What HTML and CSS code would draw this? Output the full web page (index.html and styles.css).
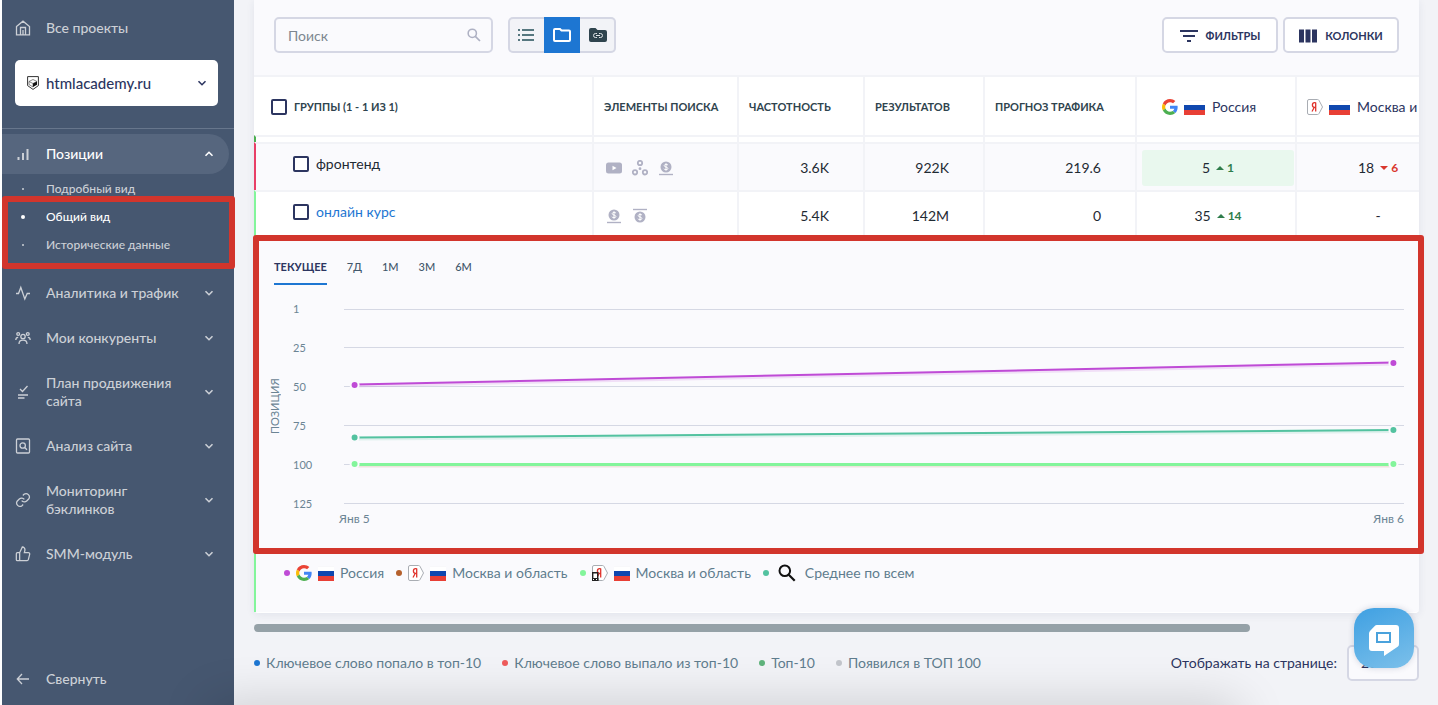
FILE: index.html
```html
<!DOCTYPE html>
<html lang="ru">
<head>
    <meta charset="UTF-8">
    <meta name="viewport" content="width=device-width, initial-scale=1.0">
    <title>Позиции - Общий вид</title>
    <link rel="stylesheet" href="styles.css">
</head>
<body>

    <!-- shared icons -->
    <svg class="sprite" aria-hidden="true">
        <symbol id="chevron" viewBox="0 0 10 10"><path d="M1.5 3.2 5 6.7 8.5 3.2" fill="none" stroke="currentColor" stroke-width="1.6"/></symbol>
        <symbol id="google" viewBox="0 0 48 48">
            <path fill="#EA4335" d="M24 9.5c3.54 0 6.71 1.22 9.21 3.6l6.85-6.85C35.9 2.38 30.47 0 24 0 14.62 0 6.51 5.38 2.56 13.22l7.98 6.19C12.43 13.72 17.74 9.5 24 9.5z"/>
            <path fill="#4285F4" d="M46.98 24.55c0-1.57-.15-3.09-.38-4.55H24v9.02h12.94c-.58 2.96-2.26 5.48-4.78 7.18l7.73 6c4.51-4.18 7.09-10.36 7.09-17.65z"/>
            <path fill="#FBBC05" d="M10.53 28.59c-.48-1.45-.76-2.99-.76-4.59s.27-3.14.76-4.59l-7.98-6.19C.92 16.46 0 20.12 0 24c0 3.88.92 7.54 2.56 10.78l7.97-6.19z"/>
            <path fill="#4CAF50" d="M24 48c6.48 0 11.93-2.13 15.89-5.81l-7.73-6c-2.15 1.45-4.92 2.3-8.16 2.3-6.26 0-11.57-4.22-13.47-9.91l-7.98 6.19C6.51 42.62 14.62 48 24 48z"/>
        </symbol>
        <symbol id="yandex" viewBox="0 0 16 16">
            <path d="M2 .5h8.500q1 0 1.500.9L15.500 8 12 14.600q-.5.9-1.500.9H2Q.5 15.500.5 14V2Q.5.5 2 .5z" fill="#fff" stroke="#a9adb3"/>
            <path d="M8.700 3.500v9M8.700 3.700H7.600Q5.400 3.700 5.400 6T7.600 8.300h1.100M7.300 8.300 5 12.500" fill="none" stroke="#e0332c" stroke-width="1.300"/>
        </symbol>
        <symbol id="flag" viewBox="0 0 21 15" preserveAspectRatio="none">
            <path fill="#fff" d="M0 0h21v5H0z"/><path fill="#0f47af" d="M0 5h21v5H0z"/><path fill="#e83f35" d="M0 10h21v5H0z"/><path stroke="#eeeef3" stroke-width=".6" d="M0 .300h21"/>
        </symbol>
        <symbol id="ad-bottom" viewBox="0 0 16 16">
            <circle cx="8" cy="7" r="5.500" fill="currentColor"/>
            <path d="M10 5.200Q9.400 4.300 8 4.300T6.200 5.600Q6.200 6.600 8 7t1.900 1.400Q9.900 9.700 8 9.700T6 8.700M8 3.300v7.400" fill="none" stroke="#fff"/>
            <path d="M1 14.500h14" stroke="currentColor" stroke-width="1.400"/>
        </symbol>
        <symbol id="search" viewBox="0 0 18 18"><circle cx="6.800" cy="6.800" r="5.300" fill="none" stroke="currentColor" stroke-width="2"/><path d="m10.700 10.700 6 6" stroke="currentColor" stroke-width="2.200"/></symbol>
    </svg>

    <div class="page">
        <aside class="sidebar">
            <a class="nav-item all-projects" href="#">
                <svg class="nav-icon" viewBox="0 0 16 16"><path d="M1.500 6.500 8 1.200l6.500 5.300v8.300h-13zM5.500 14.800V7.500h5v7.300M8 10v4.800"/></svg>
                <span>Все проекты</span>
            </a>
            <button class="project">
                <svg class="project-logo" viewBox="0 0 12 14"><path d="M.6.600h10.800v9L6 13.400.600 9.600z" fill="#fff" stroke="#333" /><path d="m2 5.500 4-2 4 2-4 2zM2 5.500v3l4 2.500V7.500" fill="none" stroke="#555" stroke-width=".7"/><path d="m6 7.500 4-2v3.300L6 11z" fill="#111"/></svg>
                <span>htmlacademy.ru</span>
                <svg class="chevron"><use href="#chevron"/></svg>
            </button>
            <nav class="menu">
                <a class="nav-item active" href="#">
                    <svg class="nav-icon bars" viewBox="0 0 16 16"><path d="M3.500 14v-3M8 14V7M12.500 14V3" stroke-width="2"/></svg>
                    <span>Позиции</span>
                    <svg class="chevron expanded"><use href="#chevron"/></svg>
                </a>
                <ul class="submenu">
                    <li><a href="#">Подробный вид</a></li>
                    <li class="current"><a href="#">Общий вид</a></li>
                    <li><a href="#">Исторические данные</a></li>
                </ul>
                <a class="nav-item" href="#">
                    <svg class="nav-icon" viewBox="0 0 16 16"><path d="M1 8.500h2.500L5.800 2.500 9.800 14l2.400-5.500H15"/></svg>
                    <span>Аналитика и трафик</span>
                    <svg class="chevron"><use href="#chevron"/></svg>
                </a>
                <a class="nav-item" href="#">
                    <svg class="nav-icon" viewBox="0 0 16 16"><circle cx="8" cy="6.500" r="2.200"/><circle cx="3.200" cy="4" r="1.400"/><circle cx="12.800" cy="4" r="1.400"/><path d="M4 14q0-3.800 4-3.800t4 3.800M.8 10q0-2.700 2.400-2.700M15.200 10q0-2.700-2.400-2.700"/></svg>
                    <span>Мои конкуренты</span>
                    <svg class="chevron"><use href="#chevron"/></svg>
                </a>
                <a class="nav-item" href="#">
                    <svg class="nav-icon" viewBox="0 0 16 16"><path d="m5 5 2.500 2.500L12.500 2M3 11h10M3 14h6.500"/></svg>
                    <span>План продвижения сайта</span>
                    <svg class="chevron"><use href="#chevron"/></svg>
                </a>
                <a class="nav-item" href="#">
                    <svg class="nav-icon" viewBox="0 0 16 16"><rect x="1.500" y="1" width="13" height="14" rx="1"/><circle cx="7.700" cy="7.500" r="2.700"/><path d="m9.700 9.500 2.300 2.300"/></svg>
                    <span>Анализ сайта</span>
                    <svg class="chevron"><use href="#chevron"/></svg>
                </a>
                <a class="nav-item" href="#">
                    <svg class="nav-icon" viewBox="0 0 24 24"><path stroke-width="1.900" d="M10 13a5 5 0 0 0 7.500.5l3-3a5 5 0 0 0-7-7l-1.700 1.700M14 11a5 5 0 0 0-7.500-.5l-3 3a5 5 0 0 0 7 7l1.700-1.700"/></svg>
                    <span>Мониторинг бэклинков</span>
                    <svg class="chevron"><use href="#chevron"/></svg>
                </a>
                <a class="nav-item" href="#">
                    <svg class="nav-icon" viewBox="0 0 24 24"><path stroke-width="1.900" d="M7 10v12M15 5.900 14 10h6a2 2 0 0 1 2 2.500l-2 8a2 2 0 0 1-2 1.500H3.500A1.500 1.500 0 0 1 2 20.500v-9A1.500 1.500 0 0 1 3.500 10H7l4-8.500c2.500 0 4 2 4 4.400z"/></svg>
                    <span>SMM-модуль</span>
                    <svg class="chevron"><use href="#chevron"/></svg>
                </a>
            </nav>
            <a class="nav-item collapse" href="#">
                <svg class="nav-icon" viewBox="0 0 16 16"><path d="M14 8H2.500M7 3 2.300 8 7 13"/></svg>
                <span>Свернуть</span>
            </a>
            <div class="marker marker-menu"></div>
        </aside>

        <main class="content">
            <section class="card">
                <div class="toolbar">
                    <div class="search">
                        <input type="text" placeholder="Поиск" aria-label="Поиск">
                        <svg><use href="#search"/></svg>
                    </div>
                    <div class="views">
                        <button aria-label="Список"><svg viewBox="0 0 18 14"><path d="M5 2h12M5 7h12M5 12h12M1 2h2M1 7h2M1 12h2" stroke="#56777f" stroke-width="2"/></svg></button>
                        <button class="selected" aria-label="Группы"><svg viewBox="0 0 18 14"><path d="M1 2.500V12q0 1 1 1h14q1 0 1-1V3.500q0-1-1-1H8.500L7 1H2Q1 1 1 2z" fill="none" stroke="#fff" stroke-width="2"/></svg></button>
                        <button aria-label="Страницы"><svg viewBox="0 0 18 14"><path d="M0 2Q0 0 2 0h4.500l2 2H16q2 0 2 2v8q0 2-2 2H2q-2 0-2-2z" fill="#2f444e"/><path d="M8 5.500H6.500a2 2 0 0 0 0 4H8M10 5.500h1.500a2 2 0 0 1 0 4H10M7 7.500h4" fill="none" stroke="#dfe3e6"/></svg></button>
                    </div>
                    <div class="actions">
                        <button><svg viewBox="0 0 18 14"><path d="M0 2h18M3 7h12M7 12h4" stroke="#2c3560" stroke-width="2"/></svg>ФИЛЬТРЫ</button>
                        <button><svg viewBox="0 0 18 14"><path d="M0 .500h5v13H0zM6.500.500h5v13h-5zM13 .500h5v13h-5z" fill="#2c3560"/></svg>КОЛОНКИ</button>
                    </div>
                </div>

                <div class="table-view">
                    <table class="keywords">
                        <colgroup>
                            <col><col class="col-serp"><col class="col-volume"><col class="col-results"><col class="col-traffic"><col class="col-google"><col class="col-yandex">
                        </colgroup>
                        <thead>
                            <tr>
                                <th><label class="check"><input type="checkbox">ГРУППЫ (1 - 1 ИЗ 1)</label></th>
                                <th>ЭЛЕМЕНТЫ ПОИСКА</th>
                                <th>ЧАСТОТНОСТЬ</th>
                                <th>РЕЗУЛЬТАТОВ</th>
                                <th>ПРОГНОЗ ТРАФИКА</th>
                                <th class="engine"><div><svg class="logo"><use href="#google"/></svg><svg class="flag"><use href="#flag"/></svg>Россия</div></th>
                                <th class="engine last"><div><svg class="logo"><use href="#yandex"/></svg><svg class="flag"><use href="#flag"/></svg>Москва и область</div></th>
                            </tr>
                        </thead>
                        <tbody>
                            <tr class="strip"><td></td><td></td><td></td><td></td><td></td><td></td><td></td></tr>
                            <tr class="keyword lost">
                                <td><label class="check"><input type="checkbox">фронтенд</label></td>
                                <td>
                                    <div class="features">
                                        <svg viewBox="0 0 16 16"><rect y="2.500" width="16" height="11" rx="2.500" fill="currentColor"/><path d="m6.500 5.700 4 2.300-4 2.300z" fill="#fff"/></svg>
                                        <svg viewBox="0 0 16 16"><g fill="none" stroke="currentColor" stroke-width="1.800"><circle cx="8" cy="3" r="2.200"/><circle cx="3" cy="12.300" r="2.200"/><circle cx="13" cy="12.300" r="2.200"/></g><circle cx="8" cy="8.700" r="1.400" fill="currentColor"/></svg>
                                        <svg><use href="#ad-bottom"/></svg>
                                    </div>
                                </td>
                                <td class="num">3.6K</td>
                                <td class="num">922K</td>
                                <td class="num">219.6</td>
                                <td class="place"><div class="top"><span>5</span><i class="rise"></i><b class="up">1</b></div></td>
                                <td class="place"><div><span>18</span><i class="fall"></i><b class="down">6</b></div></td>
                            </tr>
                            <tr class="keyword open">
                                <td><label class="check"><input type="checkbox">онлайн курс</label></td>
                                <td>
                                    <div class="features">
                                        <svg><use href="#ad-bottom"/></svg>
                                        <svg viewBox="0 0 16 16"><circle cx="8" cy="9" r="5.500" fill="currentColor"/><path d="M10 7.200Q9.400 6.300 8 6.300T6.200 7.600Q6.200 8.600 8 9t1.900 1.400Q9.900 11.700 8 11.700T6 10.700M8 5.300v7.400" fill="none" stroke="#fff"/><path d="M1 1.500h14" stroke="currentColor" stroke-width="1.400"/></svg>
                                    </div>
                                </td>
                                <td class="num">5.4K</td>
                                <td class="num">142M</td>
                                <td class="num">0</td>
                                <td class="place"><div><span>35</span><i class="rise"></i><b class="up">14</b></div></td>
                                <td class="place"><div>-</div></td>
                            </tr>
                        </tbody>
                    </table>
                </div>

                <div class="details">
                    <div class="tabs">
                        <button class="selected">ТЕКУЩЕЕ</button>
                        <button>7Д</button>
                        <button>1М</button>
                        <button>3М</button>
                        <button>6М</button>
                    </div>
                    <div class="chart">
                        <div class="axis-title">ПОЗИЦИЯ</div>
                        <div class="axis-y"><span>1</span><span>25</span><span>50</span><span>75</span><span>100</span><span>125</span></div>
                        <div class="plot">
                            <svg class="lines">
                                <g stroke="#d5d8e4">
                                    <line x1="0" x2="100%" y1="9.500" y2="9.500"/>
                                    <line x1="0" x2="100%" y1="47.500" y2="47.500"/>
                                    <line x1="0" x2="100%" y1="86.500" y2="86.500"/>
                                    <line x1="0" x2="100%" y1="125.500" y2="125.500"/>
                                    <line x1="0" x2="100%" y1="164.500" y2="164.500"/>
                                    <line x1="0" x2="100%" y1="203.500" y2="203.500"/>
                                </g>
                                <g stroke-width="3" opacity=".15">
                                    <line x1="1%" x2="99%" y1="86" y2="64" stroke="#bf4bd6"/>
                                    <line x1="1%" x2="99%" y1="139" y2="131.500" stroke="#53c2a0"/>
                                    <line x1="1%" x2="99%" y1="166" y2="166" stroke="#b5602c"/>
                                </g>
                                <g stroke-width="2">
                                    <line x1="1%" x2="99%" y1="84.500" y2="62.500" stroke="#bf4bd6"/>
                                    <line x1="1%" x2="99%" y1="137.500" y2="130" stroke="#53c2a0"/>
                                    <line x1="1%" x2="99%" y1="164.500" y2="164.500" stroke="#83f59b" stroke-width="3"/>
                                </g>
                                <g stroke="#fafafd" stroke-width="2">
                                    <circle cx="1%" cy="85" r="4" fill="#bf4bd6"/><circle cx="99%" cy="63" r="4" fill="#bf4bd6"/>
                                    <circle cx="1%" cy="137.500" r="4" fill="#53c2a0"/><circle cx="99%" cy="130" r="4" fill="#53c2a0"/>
                                    <circle cx="1%" cy="164" r="4" fill="#83f59b"/><circle cx="99%" cy="164" r="4" fill="#83f59b"/>
                                </g>
                            </svg>
                            <div class="axis-x"><span>Янв 5</span><span>Янв 6</span></div>
                        </div>
                    </div>
                    <ul class="series">
                        <li><i class="dot purple"></i><svg class="logo"><use href="#google"/></svg><svg class="flag small"><use href="#flag"/></svg>Россия</li>
                        <li><i class="dot brown"></i><svg class="logo"><use href="#yandex"/></svg><svg class="flag small"><use href="#flag"/></svg>Москва и область</li>
                        <li><i class="dot lime"></i><svg class="logo" viewBox="0 0 16 16"><use href="#yandex"/><path d="M.7 7.700h5v7.600h-5z" fill="#fff" stroke="#222" stroke-width="1.400"/><path d="M0 13h6.400v3H0z" fill="#222"/><path d="M1 14.500h1M4 14.500h1" stroke="#fff"/></svg><svg class="flag small"><use href="#flag"/></svg>Москва и область</li>
                        <li><i class="dot teal"></i><svg class="average"><use href="#search"/></svg>Среднее по всем</li>
                    </ul>
                </div>
                <div class="marker marker-chart"></div>
            </section>

            <div class="scrollbar"><div class="thumb"></div></div>

            <footer class="footer">
                <ul class="legend">
                    <li><i class="dot blue"></i>Ключевое слово попало в топ-10</li>
                    <li><i class="dot red"></i>Ключевое слово выпало из топ-10</li>
                    <li><i class="dot green"></i>Топ-10</li>
                    <li><i class="dot gray"></i>Появился в ТОП 100</li>
                </ul>
                <label for="per-page">Отображать на странице:</label>
                <select id="per-page"><option>20</option><option>50</option><option>100</option></select>
            </footer>
        </main>
    </div>

    <button class="chat" aria-label="Чат">
        <svg viewBox="0 0 30 31"><path d="M8 0h19q3 0 3 3v16q0 1.500-1 2.500L15 31v-5H3q-3 0-3-3V8.500q0-1.500 1-2.500l4.500-4.700Q6.500 0 8 0z" fill="#fff"/><rect x="8" y="8" width="13" height="9" fill="none" stroke="#4aa2dc" stroke-width="2"/></svg>
    </button>
    <div class="bottom-shade"></div>

</body>
</html>
```
FILE: styles.css
```css
* {
    box-sizing: border-box;
}

body {
    margin: 0;
    background: #f2f3f7;
    font-family: Lato, 'Open Sans', sans-serif;
    font-size: 14px;
    line-height: 18px;
    color: #2c3560;
}

button, input, select {
    font: inherit;
    color: inherit;
}

a {
    color: inherit;
    text-decoration: none;
}

ul {
    list-style: none;
    margin: 0;
    padding: 0;
}

.sprite {
    display: none;
}

.page {
    display: flex;
    min-height: 100vh;
    border-left: 2px solid #fff;
}

/* sidebar */
.sidebar {
    position: relative;
    display: flex;
    flex-direction: column;
    width: 232px;
    flex-shrink: 0;
    background: #465770;
    color: #ccd0d6;
    font-weight: 500;
}

.nav-item {
    display: flex;
    align-items: center;
    min-height: 45px;
    padding: 13px 20px 14px 13px;
}

.nav-item span {
    width: 150px;
    margin-left: 15px;
}

.nav-icon {
    width: 16px;
    height: 16px;
    flex-shrink: 0;
    fill: none;
    stroke: currentColor;
    stroke-width: 1.3;
}

.bars {
    color: #ccd0d6;
}

.chevron {
    width: 10px;
    height: 10px;
    flex-shrink: 0;
    margin-left: auto;
}

.chevron.expanded {
    transform: rotate(180deg);
}

.all-projects {
    margin-top: 6px;
}

.project {
    display: flex;
    align-items: center;
    height: 46px;
    margin: 9px 16px 22px 13px;
    padding: 0 11px 0 12px;
    border: none;
    border-radius: 5px;
    background: #fff;
    color: #2c3560;
    font-size: 15px;
    cursor: pointer;
}

.project-logo {
    width: 12px;
    height: 14px;
    margin-right: 7px;
}

.menu {
    padding-top: 5px;
    border-top: 1px solid #67768c;
}

.nav-item.active {
    min-height: 40px;
    margin-right: 5px;
    padding: 11px 15px 11px 13px;
    border-radius: 0 20px 20px 0;
    background: #56667e;
    color: #fff;
}

.submenu {
    padding: 1px 0 12px;
    font-size: 12px;
}

.submenu li {
    display: flex;
    align-items: center;
    height: 28px;
}

.submenu li::before {
    content: "";
    width: 2px;
    height: 2px;
    margin: 0 22px 0 20px;
    border-radius: 50%;
    background: currentColor;
}

.submenu .current {
    color: #fff;
}

.submenu .current::before {
    width: 4px;
    height: 4px;
    margin: 0 21px 0 19px;
}

.collapse {
    margin-top: auto;
    margin-bottom: 3px;
}

/* red frames over the interface */
.marker {
    position: absolute;
    z-index: 2;
    border: 6px solid #d2352c;
    border-radius: 3px;
    pointer-events: none;
}

.marker-menu {
    top: 196px;
    left: 0;
    right: -1px;
    height: 73px;
}

.marker-chart {
    top: 235px;
    left: -1px;
    right: -5px;
    height: 319px;
}

/* main area */
.content {
    flex: 1;
    min-width: 0;
    padding: 0 19px 0 20px;
}

.card {
    position: relative;
    background: #fafafd;
    border-bottom: 1px solid #fff;
    border-radius: 0 0 4px 4px;
    box-shadow: 0 2px 8px rgba(44, 53, 96, 0.08);
}

.toolbar {
    display: flex;
    gap: 15px;
    padding: 17px 20px 22px;
}

.search {
    display: flex;
    align-items: center;
    width: 219px;
    height: 36px;
    padding: 0 10px 0 12px;
    border: 2px solid #d5d7e4;
    border-radius: 5px;
}

.search input {
    flex: 1;
    min-width: 0;
    padding: 2px 0 0;
    border: none;
    outline: none;
    background: none;
}

.search input::placeholder {
    color: #7d8790;
}

.search svg {
    width: 14px;
    height: 14px;
    color: #aeb1c3;
}

.views {
    display: flex;
    border-radius: 5px;
    background: #f2f3f7;
    box-shadow: inset 0 0 0 2px #d5d7e4;
}

.views button {
    width: 36px;
    height: 36px;
    padding: 3px 0 0;
    border: none;
    background: none;
}

.views svg {
    width: 18px;
    height: 14px;
}

.views .selected {
    background: #1d76d2;
}

.actions {
    display: flex;
    gap: 5px;
    margin-left: auto;
}

.actions button {
    display: flex;
    align-items: center;
    justify-content: center;
    gap: 8px;
    width: 116px;
    padding: 2px 0 0;
    border: 2px solid #d5d7e4;
    border-radius: 5px;
    background: #fff;
    font-size: 11px;
    font-weight: 700;
}

.actions svg {
    width: 18px;
    height: 14px;
}

/* keywords table */
.table-view {
    overflow: hidden;
}

.keywords {
    width: calc(100% + 38px);
    table-layout: fixed;
    border-collapse: separate;
    border-spacing: 0;
    background: #fff;
    color: #1f2a33;
}

.col-serp { width: 145px; }
.col-volume { width: 126px; }
.col-results { width: 120px; }
.col-traffic { width: 152px; }
.col-google { width: 160px; }
.col-yandex { width: 160px; }

.keywords th,
.keywords td {
    padding: 0 10px;
    border-top: 2px solid #f2f3f7;
    border-right: 2px solid #f2f3f7;
    text-align: left;
    white-space: nowrap;
}

.keywords th {
    height: 60px;
    padding-top: 2px;
    color: #2f444e;
    font-size: 11px;
    font-weight: 700;
}

.keywords th:first-child {
    padding-left: 17px;
}

.check {
    display: flex;
    align-items: center;
    gap: 7px;
}

.check input {
    appearance: none;
    width: 16px;
    height: 16px;
    margin: 0;
    border: 2px solid #2c3560;
    border-radius: 2px;
    background: #fff;
}

.keywords .engine {
    color: #2c3560;
    font-size: 14px;
    font-weight: 400;
}

.engine div {
    display: flex;
    align-items: center;
    padding-left: 15px;
}

.engine.last div {
    padding-left: 0;
}

.logo {
    width: 16px;
    height: 16px;
    flex-shrink: 0;
}

.flag {
    width: 21px;
    height: 15px;
    flex-shrink: 0;
    margin: 0 7px 0 6px;
}

.flag.small {
    width: 16px;
    margin: 0 6px;
}

.keywords .strip td {
    height: 7px;
}

.keywords .strip td:first-child {
    border-left: 2px solid #4caf50;
}

.keywords .keyword td {
    height: 48px;
    padding-top: 2px;
}

.keywords .keyword td:first-child {
    padding: 0 10px 7px 37px;
    border-left: 2px solid #83f59b;
}

.keywords .lost {
    background: #fafafd;
}

.keywords .lost td:first-child {
    border-left-color: #e83e66;
}

.open label {
    color: #1d76d2;
}

.features {
    display: flex;
    gap: 10px;
    padding-left: 2px;
    color: #b0b1c4;
}

.features svg {
    width: 16px;
    height: 16px;
}

.keywords .num {
    padding-right: 34px;
    text-align: right;
}

.keywords .place {
    padding: 0 1px 0 5px;
}

.place div {
    display: flex;
    align-items: center;
    justify-content: center;
    gap: 6px;
    height: 36px;
    border-radius: 3px;
}

.place .top {
    background: #e9f8ee;
}

.place b {
    margin-left: -3px;
    font-size: 12px;
    font-weight: 700;
}

.place i {
    border: 4px solid transparent;
    border-top-width: 0;
    border-bottom: 4px solid #2f7d4b;
}

.place .fall {
    border-top: 4px solid #d9372e;
    border-bottom-width: 0;
}

.place .up {
    color: #2f7d4b;
}

.place .down {
    color: #d9372e;
}

/* expanded row with chart */
.details {
    border-left: 2px solid #83f59b;
    border-top: 2px solid #f2f3f7;
    padding: 14px 15px 30px 18px;
}

.tabs {
    display: flex;
    gap: 20px;
}

.tabs button {
    height: 31px;
    padding: 0 0 4px;
    border: none;
    border-bottom: 2px solid transparent;
    background: none;
    color: #42576b;
    font-size: 11px;
    font-weight: 500;
}

.tabs .selected {
    border-bottom-color: #1d76d2;
    color: #2c3560;
    font-weight: 700;
}

.chart {
    display: flex;
    height: 279px;
    padding-top: 15px;
    color: #6b8494;
    font-size: 11px;
}

.axis-title {
    width: 19px;
    height: 212px;
    margin: 0 8px 0 -8px;
    line-height: 18px;
    text-align: center;
    writing-mode: vertical-rl;
    transform: rotate(180deg);
}

.axis-y {
    display: flex;
    flex-direction: column;
    justify-content: space-between;
    width: 51px;
    height: 213px;
}

.plot {
    flex: 1;
}

.lines {
    display: block;
    width: 100%;
    height: 210px;
}

.axis-x {
    display: flex;
    justify-content: space-between;
    margin-left: -5px;
    font-size: 12px;
}

.series,
.legend {
    display: flex;
    color: #5f7d8e;
}

.series {
    gap: 12px;
    padding-left: 10px;
}

.series li,
.legend li {
    display: flex;
    align-items: center;
}

.dot {
    width: 6px;
    height: 6px;
    flex-shrink: 0;
    margin-right: 6px;
    border-radius: 50%;
}

.purple { background: #bf4bd6; }
.brown { background: #b5602c; }
.lime { background: #83f59b; }
.teal { background: #53c2a0; }
.blue { background: #1d76d2; }
.red { background: #ee5b5b; }
.green { background: #5fb37c; }
.gray { background: #c2c5cb; }

.average {
    width: 18px;
    height: 18px;
    margin: 0 9px 0 3px;
    color: #111;
}

/* below the card */
.scrollbar {
    margin-top: 11px;
}

.thumb {
    width: 85.5%;
    height: 8px;
    border-radius: 4px;
    background: #95a1a7;
}

.footer {
    display: flex;
    align-items: center;
    padding: 13px 0 24px;
}

.legend {
    gap: 21px;
}

.footer label {
    margin-left: auto;
}

.footer select {
    appearance: none;
    width: 72px;
    height: 36px;
    margin-left: 10px;
    padding: 0 12px;
    border: 2px solid #d5d7e4;
    border-radius: 5px;
    background: #fafafd;
}

.chat {
    position: fixed;
    right: 24px;
    bottom: 37px;
    z-index: 3;
    display: flex;
    align-items: center;
    justify-content: center;
    width: 60px;
    height: 60px;
    padding: 4px 0 0;
    border: none;
    border-radius: 20px;
    background: linear-gradient(155deg, #3fa0e2, #7cc0ea);
    box-shadow: 0 0 6px rgba(44, 53, 96, 0.2);
}

.chat svg {
    width: 30px;
    height: 31px;
}

.bottom-shade {
    position: fixed;
    top: 100%;
    left: 210px;
    right: 200px;
    height: 40px;
    box-shadow: 0 0 50px rgba(0, 0, 0, 0.18);
}
```
